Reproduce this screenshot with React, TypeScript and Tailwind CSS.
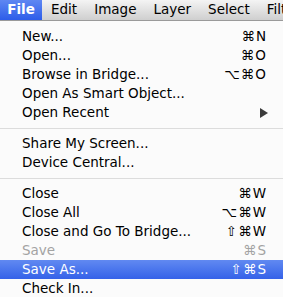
import React from 'react';

interface Item {
  label: string;
  shortcut?: string;
  disabled?: boolean;
  active?: boolean;
  submenu?: boolean;
}

type Entry = Item | 'sep';

const menuTitles = ['Edit', 'Image', 'Layer', 'Select', 'Filter'];

const entries: Entry[] = [
  { label: 'New...', shortcut: '⌘N' },
  { label: 'Open...', shortcut: '⌘O' },
  { label: 'Browse in Bridge...', shortcut: '⌥⌘O' },
  { label: 'Open As Smart Object...' },
  { label: 'Open Recent', submenu: true },
  'sep',
  { label: 'Share My Screen...' },
  { label: 'Device Central...' },
  'sep',
  { label: 'Close', shortcut: '⌘W' },
  { label: 'Close All', shortcut: '⌥⌘W' },
  { label: 'Close and Go To Bridge...', shortcut: '⇧⌘W' },
  { label: 'Save', shortcut: '⌘S', disabled: true },
  { label: 'Save As...', shortcut: '⇧⌘S', active: true },
  { label: 'Check In...' },
];

const MenuRow: React.FC<{ item: Item }> = ({ item }) => {
  const rowClass = item.active
    ? 'bg-gradient-to-b from-[#6189f1] to-[#3561e8] text-white'
    : item.disabled
      ? 'text-[#a3a3a3]'
      : 'text-black';
  return (
    <div className={`flex h-[19px] items-center justify-between pl-[22px] pr-[16px] ${rowClass}`}>
      <span>{item.label}</span>
      {item.shortcut && <span className="tracking-[1px]">{item.shortcut}</span>}
      {item.submenu && (
        <svg width="8" height="10" viewBox="0 0 8 10" className="mr-[-1px]">
          <path d="M0 0 L8 5 L0 10 Z" fill="#3a3a3a" />
        </svg>
      )}
    </div>
  );
};

export default function App() {
  return (
    <div
      className="h-[297px] w-[283px] overflow-hidden bg-[#fbfbfb] text-[13.5px] leading-none"
      style={{ fontFamily: '"DejaVu Sans", "Liberation Sans", sans-serif' }}
    >
      <div className="flex h-[21px] items-center overflow-hidden whitespace-nowrap border-b border-[#9a9a9a] bg-gradient-to-b from-[#f4f4f4] to-[#cfcfcf] text-[13.5px]">
        <div className="flex h-full w-[42px] shrink-0 items-center justify-center bg-gradient-to-b from-[#5f87f2] to-[#2d5ce9] font-bold text-white">
          File
        </div>
        <div className="flex shrink-0 gap-[17px] pl-[9px] text-black">
          {menuTitles.map(t => (
            <span key={t}>{t}</span>
          ))}
        </div>
      </div>
      <div className="pt-[6px]">
        {entries.map((e, i) =>
          e === 'sep' ? (
            <div key={i} className="pb-[5px] pt-[6px]">
              <div className="h-px bg-[#dcdcdc]" />
            </div>
          ) : (
            <MenuRow key={i} item={e} />
          )
        )}
      </div>
    </div>
  );
}
